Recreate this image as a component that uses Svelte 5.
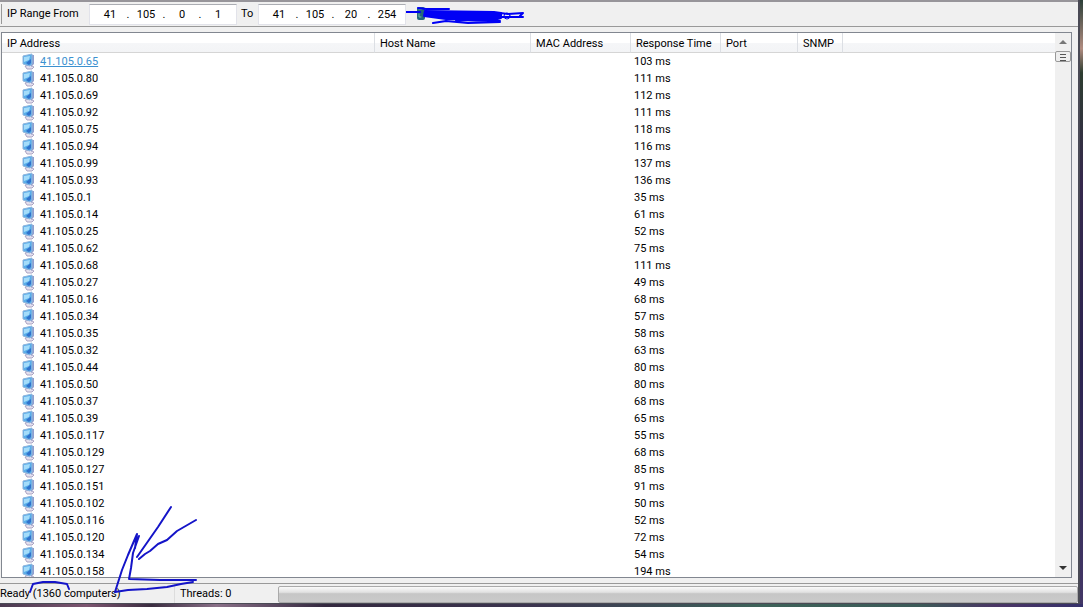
<script>
  let from = ["41", "105", "0", "1"];
  let to = ["41", "105", "20", "254"];

  let columns = [
    { name: "IP Address", cls: "ip" },
    { name: "Host Name", cls: "host" },
    { name: "MAC Address", cls: "mac" },
    { name: "Response Time", cls: "time" },
    { name: "Port", cls: "port" },
    { name: "SNMP", cls: "snmp" },
    { name: "", cls: "rest" }
  ];

  let computers = [
    [65, 103], [80, 111], [69, 112], [92, 111], [75, 118], [94, 116],
    [99, 137], [93, 136], [1, 35], [14, 61], [25, 52], [62, 75],
    [68, 111], [27, 49], [16, 68], [34, 57], [35, 58], [32, 63],
    [44, 80], [50, 80], [37, 68], [39, 65], [117, 55], [129, 68],
    [127, 85], [151, 91], [102, 50], [116, 52], [120, 72], [134, 54],
    [158, 194]
  ];

  let selected = 0;
</script>

{#snippet range(label, octets)}
  <div class="field" role="group" aria-label={label}>
    {#each octets as octet, i}
      {#if i > 0}<span class="dot">.</span>{/if}
      <input type="text" maxlength="3" aria-label="{label} {i + 1}" bind:value={octets[i]} />
    {/each}
  </div>
{/snippet}

<div class="desktop">
  <div class="window">
    <div class="toolbar">
      <span class="label">IP Range From</span>
      {@render range("From", from)}
      <span class="label to">To</span>
      {@render range("To", to)}
      <svg class="scribble" width="122" height="22" viewBox="0 0 122 22" aria-hidden="true">
        <rect x="11" y="4" width="8" height="13" rx="2" fill="#23687c" stroke="none" />
        <path d="M13 6H16M13 11V14H15" stroke="#75b5a4" stroke-width="1" />
        <path d="M0 9H14" stroke-width="2" />
        <path d="M12 5L20 6H43" stroke-width="2" />
        <path d="M19 8L88 9L95 10V15L88 17L40 16L18 13Z" fill="#0000f5" stroke-width="2" />
        <path d="M27 20L40 18L62 20L94 19M50 17L94 18" stroke-width="2" />
        <path d="M94 10L102 11L117 10L114 13M94 14H117" stroke-width="2" />
        <circle cx="101" cy="13" r="3" stroke-width="1" />
      </svg>
    </div>

    <div class="list">
      <div class="view">
        <table>
          <thead>
            <tr>
              {#each columns as column}
                <th class={column.cls}>{column.name}</th>
              {/each}
            </tr>
          </thead>
          <tbody>
            {#each computers as [host, ms], i}
              <tr>
                <td>
                  <div class="address" class:selected={i == selected}>
                    <svg width="13" height="17" viewBox="0 0 13 17" aria-hidden="true">
                      <path d="M3 13L8 12L12 14L10 16H5Z" fill="#e4e0ee" stroke="#aaa3c2" />
                      <path d="M9 2L12 2V11L9 14Z" fill="#8f9fce" />
                      <path d="M1 3L10 1V11L8 13L1 11Z" fill="#58aeea" />
                      <path d="M1 3L10 1V11L8 13L1 11Z" fill="none" stroke="#8fb4dc" />
                      <path d="M2 4L8 3L7 7L2 9Z" fill="#a4dcfa" />
                      <path d="M4 10L9 6V10L7 12Z" fill="#3172cc" />
                    </svg>
                    <span>41.105.0.{host}</span>
                  </div>
                </td>
                <td></td>
                <td></td>
                <td>{ms} ms</td>
                <td></td>
                <td></td>
                <td></td>
              </tr>
            {/each}
          </tbody>
        </table>
      </div>
      <div class="scrollbar">
        <button aria-label="Scroll up">
          <svg width="8" height="4" viewBox="0 0 8 4"><path d="M4 0L8 4H0Z" fill="#777" /></svg>
        </button>
        <div class="thumb">
          <svg width="8" height="8" viewBox="0 0 8 8"><path d="M1 1.5H7M1 4.5H7M1 7.5H7" stroke="#555" /></svg>
        </div>
        <button class="down" aria-label="Scroll down">
          <svg width="8" height="4" viewBox="0 0 8 4"><path d="M0 0H8L4 4Z" fill="#333" /></svg>
        </button>
      </div>
    </div>

    <div class="status">
      <span class="ready">Ready (1360 computers)</span>
      <span class="threads">Threads: 0</span>
      <div class="progress"></div>
    </div>
  </div>

  <svg class="arrow" width="200" height="107" viewBox="0 0 200 107" aria-hidden="true">
    <path d="M171 7L158 27L137 57M196 20L177 31L167 40L158 44L150 51L145 54L139 59" />
    <path d="M115 92L122 70L128 55L137 34L135 48M139 36L133 53L131 68L129 79L160 80L196 80M193 82L181 84L167 87L147 89L128 90L115 92" />
    <path d="M30 92L33 84L43 82H55L67 84L69 89" />
  </svg>
</div>

<style>
  :global(body) {
    margin: 0;
  }
  .desktop {
    position: relative;
    box-sizing: border-box;
    height: 100vh;
    padding: 0 3px 3px 0;
    overflow: hidden;
    background:
      linear-gradient(90deg, #4a3a50, #7d5570 8%, #3a2c40 14%, #8a7088 20%, #33283f 30%, #3c3550 50%, #3d6259 70%, #3c5a58 85%, #4b3566 92%, #35306a) bottom / 100% 3px no-repeat,
      linear-gradient(#2c3f38, #b08c80 8%, #2d3d30 12%, #35284c 30%, #2b2350 60%, #433766);
    font-family: Roboto, "Liberation Sans", Arial, sans-serif;
    font-size: 11px;
    color: #000;
    white-space: nowrap;
  }
  .window {
    box-sizing: border-box;
    height: 100%;
    display: flex;
    flex-direction: column;
    background: #f0f0f0;
    border-right: 2px solid #4a4a55;
    border-bottom: 1px solid #4a4a55;
  }
  .toolbar {
    display: flex;
    align-items: center;
    height: 24px;
    padding-left: 1px;
    border-top: 2px solid #97959a;
    border-bottom: 1px solid #999;
  }
  .label {
    box-sizing: border-box;
    width: 88px;
    padding-left: 5px;
    border-left: 1px solid #999;
    line-height: 20px;
  }
  .to {
    width: 21px;
    padding-left: 4px;
    border: 0;
  }
  .field {
    box-sizing: border-box;
    display: flex;
    align-items: center;
    width: 148px;
    height: 21px;
    padding-left: 4px;
    background: #fff;
    border: 1px solid #e2e3ea;
    border-top-color: #abadb3;
  }
  .field input {
    width: 32px;
    padding: 0;
    border: 0;
    outline: 0;
    background: none;
    color: inherit;
    font: inherit;
    text-align: center;
  }
  .dot {
    width: 4px;
    text-align: center;
  }
  .scribble {
    fill: none;
    stroke: #0000f5;
    stroke-linecap: round;
    stroke-linejoin: round;
  }
  .list {
    flex: 1;
    min-height: 0;
    display: flex;
    margin: 5px 6px 5px 1px;
    background: #fff;
    border: 1px solid #828790;
  }
  .view {
    flex: 1;
    overflow: hidden;
  }
  table {
    width: 100%;
    table-layout: fixed;
    border-collapse: separate;
    border-spacing: 0;
    line-height: 17px;
  }
  th {
    box-sizing: border-box;
    height: 20px;
    padding: 2px 0 0 5px;
    border-right: 1px solid #dcdfe4;
    border-bottom: 1px solid #d5d5d5;
    background: linear-gradient(#fff 50%, #f5f6f8 50%, #f3f4f6);
    font-weight: normal;
    text-align: left;
  }
  .ip {
    width: 373px;
  }
  .host {
    width: 156px;
  }
  .mac {
    width: 100px;
  }
  .time {
    width: 90px;
  }
  .port {
    width: 77px;
  }
  .snmp {
    width: 45px;
  }
  .rest {
    border-right: 0;
  }
  td {
    height: 17px;
    padding: 0 0 0 3px;
  }
  .address {
    display: flex;
    gap: 5px;
    padding-left: 17px;
  }
  .selected span {
    color: #3c91d0;
    text-decoration: underline;
  }
  .scrollbar {
    display: flex;
    flex-direction: column;
    width: 16px;
    background: #f0f0f0;
  }
  .scrollbar button {
    display: flex;
    align-items: center;
    justify-content: center;
    height: 18px;
    padding: 0;
    border: 0;
    background: none;
  }
  .scrollbar .down {
    margin-top: auto;
  }
  .thumb {
    display: flex;
    align-items: center;
    justify-content: center;
    height: 9px;
    border: 1px solid #999;
    border-radius: 2px;
    background: #eee;
  }
  .status {
    display: flex;
    height: 19px;
    border-top: 1px solid #999;
    line-height: 20px;
  }
  .ready {
    width: 174px;
    border-right: 1px solid #ddd;
  }
  .threads {
    width: 98px;
    padding-left: 5px;
  }
  .progress {
    flex: 1;
    margin: 2px 0 0;
    border: 1px solid #aaa;
    border-radius: 2px;
    background: linear-gradient(#fafafa, #e2e2e2 35%, #c6c6c6 45%, #cacaca);
  }
  .arrow {
    position: absolute;
    left: 0;
    bottom: 0;
    fill: none;
    stroke: #1414c8;
    stroke-width: 2;
    stroke-linecap: round;
    stroke-linejoin: round;
    pointer-events: none;
  }
</style>
